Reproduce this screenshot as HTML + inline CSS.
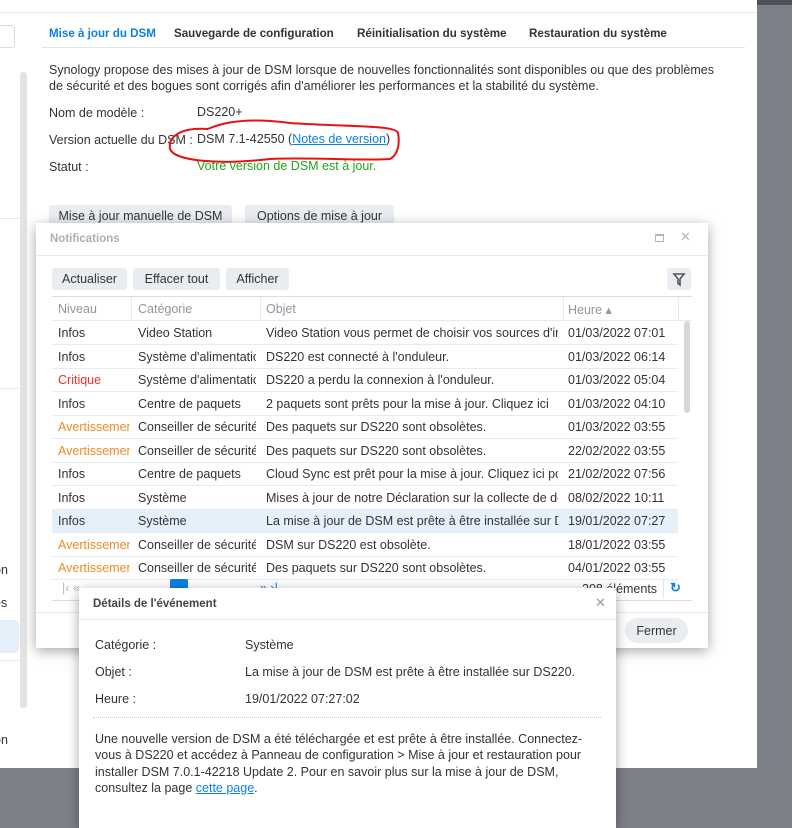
<!DOCTYPE html>
<html><head><meta charset="utf-8"><style>
*{margin:0;padding:0;box-sizing:border-box}
body{width:792px;height:812px;overflow:hidden;background:#7c8087;font-family:"Liberation Sans",sans-serif;font-size:12.5px;color:#333;position:relative}
.a{position:absolute;white-space:nowrap}
.main{position:absolute;left:0;top:0;width:757px;height:768px;background:#fff}
.btn{position:absolute;background:#e9edf2;border-radius:3px;text-align:center;color:#333;font-size:12.5px}
.win{position:absolute;background:#fff;box-shadow:0 3px 12px rgba(0,0,0,.35)}
.row{position:absolute;left:16px;width:626px;height:23px;border-bottom:1px solid #e6ebf0;font-size:12.5px}
.row span{position:absolute;top:4px;white-space:nowrap;overflow:hidden}
.o{color:#f08a24}.r{color:#e8302f}
.t{font-weight:bold;font-size:11.6px}
</style></head><body>
<div style="position:absolute;left:757px;top:0;width:35px;height:5px;background:#4d5158"></div>
<div class="main">
 <div class="a" style="left:0;top:12px;width:757px;border-top:1px solid #e3e7ec"></div>
 <div class="a" style="left:-4px;top:25px;width:19px;height:23px;border:1px solid #d5dbe2;border-radius:3px"></div>
 <div class="a" style="left:20px;top:72px;width:7px;height:636px;background:#e3e3e3;border-radius:3px"></div>
 <div class="a" style="left:0;top:218px;width:19px;border-top:1px solid #e3e7ec"></div>
 <div class="a" style="left:0;top:388px;width:19px;border-top:1px solid #e3e7ec"></div>
 <div class="a" style="left:0;top:620px;width:19px;height:33px;background:#e5f0fb;border-radius:0 4px 4px 0"></div>
 <div class="a" style="left:0;top:660px;width:19px;border-top:1px solid #e3e7ec"></div>
 <div class="a" style="left:-6px;top:563px">on</div>
 <div class="a" style="left:-6px;top:596px">es</div>
 <div class="a" style="left:-6px;top:733px">on</div>
 <div class="a t" style="left:49px;top:27px;color:#0a80e6">Mise à jour du DSM</div>
 <div class="a t" style="left:174px;top:27px">Sauvegarde de configuration</div>
 <div class="a t" style="left:357px;top:27px">Réinitialisation du système</div>
 <div class="a t" style="left:529px;top:27px">Restauration du système</div>
 <div class="a" style="left:42px;top:47px;width:703px;border-top:1px solid #dfe5ec"></div>
 <div class="a" style="left:49px;top:63px">Synology propose des mises à jour de DSM lorsque de nouvelles fonctionnalités sont disponibles ou que des problèmes</div>
 <div class="a" style="left:49px;top:79px">de sécurité et des bogues sont corrigés afin d'améliorer les performances et la stabilité du système.</div>
 <div class="a" style="left:49px;top:106px">Nom de modèle :</div>
 <div class="a" style="left:197px;top:105px">DS220+</div>
 <div class="a" style="left:49px;top:133px">Version actuelle du DSM :</div>
 <div class="a" style="left:197px;top:132px">DSM 7.1-42550 (<span style="color:#0a80e6;text-decoration:underline">Notes de version</span>)</div>
 <div class="a" style="left:49px;top:160px">Statut :</div>
 <div class="a" style="left:197px;top:159px;color:#1ea61e">Votre version de DSM est à jour.</div>
 <svg class="a" style="left:160px;top:115px" width="250" height="52"><path d="M48 14 C20 12 8 22 10 34 C14 46 60 50 110 44 C150 42 200 46 230 44 C238 40 240 28 238 18 C236 10 190 12 130 8 C100 4 70 4 48 14" fill="none" stroke="#e81010" stroke-width="2"/></svg>
 <div class="btn" style="left:49px;top:205px;width:183px;height:22px;line-height:22px">Mise à jour manuelle de DSM</div>
 <div class="btn" style="left:245px;top:205px;width:149px;height:22px;line-height:22px">Options de mise à jour</div>
</div>

<div class="win" style="left:36px;top:223px;width:672px;height:425px">
 <div class="a" style="left:14px;top:10px;color:#a9b0b8;font-weight:bold;font-size:11.5px">Notifications</div>
 <div class="a" style="left:619px;top:11px;width:9px;height:8px;border:1px solid #b0b6bd;border-top-width:2px"></div>
 <div class="a" style="left:644px;top:6px;color:#b0b6bd;font-size:13px">✕</div>
 <div class="a" style="left:0;top:32px;width:672px;border-top:1px solid #e6eaee"></div>
 <div class="btn" style="left:16px;top:45px;width:75px;height:22px;line-height:23px">Actualiser</div>
 <div class="btn" style="left:97px;top:45px;width:87px;height:22px;line-height:23px">Effacer tout</div>
 <div class="btn" style="left:190px;top:45px;width:63px;height:22px;line-height:23px">Afficher</div>
 <div class="btn" style="left:631px;top:45px;width:24px;height:22px"><svg width="24" height="22"><path d="M7 6 H17 L13 11 V17 L11 15.5 V11 Z" fill="none" stroke="#555" stroke-width="1.6"/></svg></div>
 <div class="a" style="left:16px;top:73px;width:640px;height:25px;border-top:1px solid #d8dee5;border-bottom:1px solid #e6ebf0;color:#8f979f">
  <span class="a" style="left:6px;top:5px">Niveau</span>
  <span class="a" style="left:79px;top:0;height:24px;border-left:1px solid #e6ebf0"></span>
  <span class="a" style="left:86px;top:5px">Catégorie</span>
  <span class="a" style="left:208px;top:0;height:24px;border-left:1px solid #e6ebf0"></span>
  <span class="a" style="left:214px;top:5px">Objet</span>
  <span class="a" style="left:511px;top:0;height:24px;border-left:1px solid #e6ebf0"></span>
  <span class="a" style="left:516px;top:5px">Heure ▴</span>
  <span class="a" style="left:626px;top:0;height:24px;border-left:1px solid #e6ebf0"></span>
 </div>
 <div class="a" style="left:648px;top:98px;width:6px;height:92px;background:#d8d8d8;border-radius:3px"></div>
 <div style="position:absolute;left:0;top:99px">
  <div class="row" style="top:0"><span style="left:6px">Infos</span><span style="left:86px;width:118px">Video Station</span><span style="left:214px;width:292px">Video Station vous permet de choisir vos sources d'informations</span><span style="left:516px">01/03/2022 07:01</span></div>
  <div class="row" style="top:23.5px"><span style="left:6px">Infos</span><span style="left:86px;width:118px">Système d'alimentation</span><span style="left:214px;width:292px">DS220 est connecté à l'onduleur.</span><span style="left:516px">01/03/2022 06:14</span></div>
  <div class="row" style="top:47px"><span class="r" style="left:6px">Critique</span><span style="left:86px;width:118px">Système d'alimentation</span><span style="left:214px;width:292px">DS220 a perdu la connexion à l'onduleur.</span><span style="left:516px">01/03/2022 05:04</span></div>
  <div class="row" style="top:70.5px"><span style="left:6px">Infos</span><span style="left:86px;width:118px">Centre de paquets</span><span style="left:214px;width:292px">2 paquets sont prêts pour la mise à jour. Cliquez ici</span><span style="left:516px">01/03/2022 04:10</span></div>
  <div class="row" style="top:94px"><span class="o" style="left:6px;width:72px">Avertissement</span><span style="left:86px;width:118px">Conseiller de sécurité</span><span style="left:214px;width:292px">Des paquets sur DS220 sont obsolètes.</span><span style="left:516px">01/03/2022 03:55</span></div>
  <div class="row" style="top:117.5px"><span class="o" style="left:6px;width:72px">Avertissement</span><span style="left:86px;width:118px">Conseiller de sécurité</span><span style="left:214px;width:292px">Des paquets sur DS220 sont obsolètes.</span><span style="left:516px">22/02/2022 03:55</span></div>
  <div class="row" style="top:141px"><span style="left:6px">Infos</span><span style="left:86px;width:118px">Centre de paquets</span><span style="left:214px;width:292px">Cloud Sync est prêt pour la mise à jour. Cliquez ici pour</span><span style="left:516px">21/02/2022 07:56</span></div>
  <div class="row" style="top:164.5px"><span style="left:6px">Infos</span><span style="left:86px;width:118px">Système</span><span style="left:214px;width:292px">Mises à jour de notre Déclaration sur la collecte de données</span><span style="left:516px">08/02/2022 10:11</span></div>
  <div class="row" style="top:188px;background:#e5f0fb"><span style="left:6px">Infos</span><span style="left:86px;width:118px">Système</span><span style="left:214px;width:292px">La mise à jour de DSM est prête à être installée sur DS220.</span><span style="left:516px">19/01/2022 07:27</span></div>
  <div class="row" style="top:211.5px"><span class="o" style="left:6px;width:72px">Avertissement</span><span style="left:86px;width:118px">Conseiller de sécurité</span><span style="left:214px;width:292px">DSM sur DS220 est obsolète.</span><span style="left:516px">18/01/2022 03:55</span></div>
  <div class="row" style="top:235px"><span class="o" style="left:6px;width:72px">Avertissement</span><span style="left:86px;width:118px">Conseiller de sécurité</span><span style="left:214px;width:292px">Des paquets sur DS220 sont obsolètes.</span><span style="left:516px">04/01/2022 03:55</span></div>
 </div>
 <div class="a" style="left:26px;top:358px;color:#b5bbc2">|‹ «</div>
 <div class="a" style="left:134px;top:356px;width:18px;height:10px;background:#0a80e6;border-radius:2px"></div>
 <div class="a" style="left:224px;top:358px;color:#0a80e6">» ›|</div>
 <div class="a" style="left:546px;top:359px">208 éléments</div>
 <div class="a" style="left:627px;top:357px;height:18px;border-left:1px solid #e0e5ea"></div>
 <div class="a" style="left:634px;top:357px;color:#0a80e6;font-weight:bold;font-size:13px">↻</div>
 <div class="a" style="left:16px;top:377px;width:640px;border-top:1px solid #d8dee5"></div>
 <div class="a" style="left:0;top:389px;width:672px;border-top:1px solid #e6eaee"></div>
 <div class="btn" style="left:589px;top:395px;width:63px;height:25px;line-height:26px;border-radius:13px">Fermer</div>
</div>

<div class="win" style="left:79px;top:588px;width:537px;height:240px">
 <div class="a" style="left:14px;top:10px;font-weight:bold;font-size:11.5px;color:#444">Détails de l'événement</div>
 <div class="a" style="left:516px;top:7px;color:#999;font-size:13px">✕</div>
 <div class="a" style="left:0;top:31px;width:537px;border-top:1px solid #e3e7ec"></div>
 <div class="a" style="left:16px;top:50px">Catégorie :</div>
 <div class="a" style="left:166px;top:50px">Système</div>
 <div class="a" style="left:16px;top:77px">Objet :</div>
 <div class="a" style="left:166px;top:77px">La mise à jour de DSM est prête à être installée sur DS220.</div>
 <div class="a" style="left:16px;top:104px">Heure :</div>
 <div class="a" style="left:166px;top:104px">19/01/2022 07:27:02</div>
 <div class="a" style="left:14px;top:129px;width:508px;border-top:1px dotted #ccc"></div>
 <div class="a" style="left:16px;top:143px;line-height:16.3px">Une nouvelle version de DSM a été téléchargée et est prête à être installée. Connectez-<br>vous à DS220 et accédez à Panneau de configuration &gt; Mise à jour et restauration pour<br>installer DSM 7.0.1-42218 Update 2. Pour en savoir plus sur la mise à jour de DSM,<br>consultez la page <span style="color:#0a80e6;text-decoration:underline">cette page</span>.</div>
</div>
</body></html>
